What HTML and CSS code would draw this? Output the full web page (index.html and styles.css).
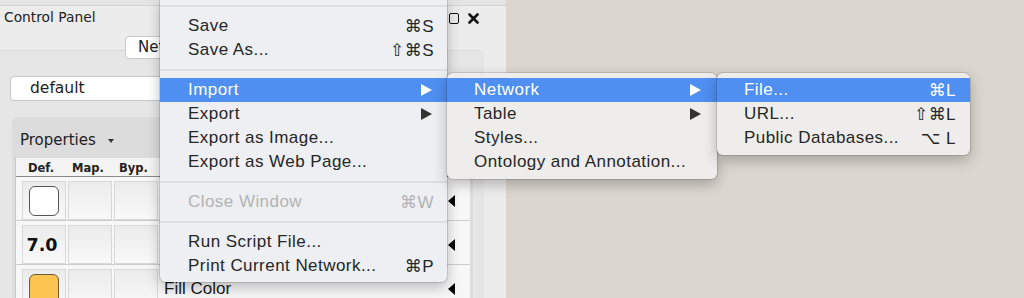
FILE: index.html
```html
<!DOCTYPE html>
<html lang="en">
<head>
<meta charset="UTF-8">
<title>Control Panel - File menu</title>
<link rel="stylesheet" href="styles.css">
</head>
<body>
<div class="desktop">
<div class="control-panel">
<div class="panel-top"></div>
<div class="title-row">
<span class="title">Control Panel</span>
<span class="win-icons">
<span class="win-float"></span>
<svg class="win-close" width="11" height="11" viewBox="0 0 11 11"><path d="M1.5 1.5 L9.5 9.5 M9.5 1.5 L1.5 9.5" stroke="#111" stroke-width="2.6" stroke-linecap="round"/></svg>
</span>
</div>
<div class="tabs">
<span class="tab">Network</span>
</div>
<div class="tab-body">
<div class="style-select">default</div>
<div class="props">
<div class="props-head">Properties <span class="caret"></span></div>
<div class="props-table">
<div class="thead">
<span class="th-def">Def.</span>
<span class="th-map">Map.</span>
<span>Byp.</span>
</div>
<div class="row">
<div class="cell"><span class="swatch"></span></div>
<div class="cell"></div>
<div class="cell"></div>
<span class="label"></span>
<span class="row-arrow"></span>
</div>
<div class="row">
<div class="cell"><span class="num">7.0</span></div>
<div class="cell"></div>
<div class="cell"></div>
<span class="label"></span>
<span class="row-arrow"></span>
</div>
<div class="row">
<div class="cell"><span class="swatch orange"></span></div>
<div class="cell"></div>
<div class="cell"></div>
<span class="label">Fill Color</span>
<span class="row-arrow"></span>
</div>
</div>
</div>
</div>
</div>
<div class="canvas"></div>

<div class="menu menu-main">
<div class="sep"></div>
<div class="item"><span>Save</span><span class="key">⌘S</span></div>
<div class="item"><span>Save As...</span><span class="key">⇧⌘S</span></div>
<div class="sep"></div>
<div class="item active"><span>Import</span><svg class="sub" width="11" height="12" viewBox="0 0 11 12"><polygon points="0,0 11,6 0,12"/></svg></div>
<div class="item"><span>Export</span><svg class="sub" width="11" height="12" viewBox="0 0 11 12"><polygon points="0,0 11,6 0,12"/></svg></div>
<div class="item"><span>Export as Image...</span></div>
<div class="item"><span>Export as Web Page...</span></div>
<div class="sep"></div>
<div class="item disabled"><span>Close Window</span><span class="key">⌘W</span></div>
<div class="sep"></div>
<div class="item"><span>Run Script File...</span></div>
<div class="item"><span>Print Current Network...</span><span class="key">⌘P</span></div>
</div>

<div class="menu menu-sub menu-import">
<div class="item active"><span>Network</span><svg class="sub" width="11" height="12" viewBox="0 0 11 12"><polygon points="0,0 11,6 0,12"/></svg></div>
<div class="item"><span>Table</span><svg class="sub" width="11" height="12" viewBox="0 0 11 12"><polygon points="0,0 11,6 0,12"/></svg></div>
<div class="item"><span>Styles...</span></div>
<div class="item"><span>Ontology and Annotation...</span></div>
</div>

<div class="menu menu-sub menu-network">
<div class="item active"><span>File...</span><span class="key">⌘L</span></div>
<div class="item"><span>URL...</span><span class="key">⇧⌘L</span></div>
<div class="item"><span>Public Databases...</span><span class="key">⌥ L</span></div>
</div>
</div>
</body>
</html>
```
FILE: styles.css
```css
body {
margin: 0;
font-family: "DejaVu Sans", sans-serif;
background: #dbd6cf;
overflow: hidden;
}
.desktop {
position: relative;
display: flex;
height: 298px;
overflow: hidden;
}
.control-panel {
width: 506px;
flex-shrink: 0;
background: #ececec;
display: flex;
flex-direction: column;
color: #222;
}
.control-panel > * {
flex-shrink: 0;
}
.panel-top {
height: 5px;
background: #e4e4e4;
border-bottom: 1px solid #d3d3d3;
}
.title-row {
height: 22px;
display: flex;
align-items: center;
padding-left: 4px;
font-size: 13.8px;
}
.title-row .title {
flex: 1;
}
.win-icons {
display: flex;
align-items: center;
gap: 9px;
margin-right: 27px;
margin-top: 2px;
}
.win-float {
width: 10px;
height: 11px;
box-sizing: border-box;
border: 1.5px solid #111;
border-radius: 2px;
}
.tabs {
display: flex;
padding-left: 125px;
margin-top: 8px;
position: relative;
z-index: 1;
}
.tab {
height: 23px;
box-sizing: border-box;
padding: 0 12px;
background: #fff;
border: 1px solid #c9c9c9;
border-radius: 4px;
font-size: 15px;
line-height: 21px;
}
.tab-body {
margin-top: -9px;
width: 484px;
height: 260px;
box-sizing: border-box;
background: #e6e6e6;
border-top: 1px solid #dadada;
border-top-right-radius: 6px;
padding: 25px 0 0 10px;
}
.style-select {
width: 462px;
height: 25px;
box-sizing: border-box;
background: #fff;
border: 1px solid #c8c8c8;
border-radius: 4px;
padding-left: 19px;
font-size: 15.5px;
line-height: 23px;
}
.props {
margin: 16px 0 0 2px;
width: 461px;
height: 200px;
background: #dcdcdc;
border-radius: 6px 6px 0 0;
}
.props-head {
height: 41px;
box-sizing: border-box;
display: flex;
align-items: center;
padding: 5px 0 0 8px;
font-size: 15px;
}
.caret {
margin-left: 12px;
margin-top: 1px;
border-left: 3px solid transparent;
border-right: 3px solid transparent;
border-top: 4px solid #333;
}
.props-table {
margin-left: 3px;
width: 454px;
height: 160px;
background: #f7f7f7;
border-left: 1px solid #c5c5c5;
}
.thead {
height: 19px;
box-sizing: border-box;
display: flex;
align-items: center;
padding: 2px 0 0 12px;
background: #f4f4f4;
border-bottom: 1px solid #8a8a8a;
font-size: 11.5px;
font-weight: bold;
}
.th-def {
width: 44px;
}
.th-map {
width: 47px;
}
.row {
display: flex;
height: 44px;
box-sizing: border-box;
padding: 4px 15px 0 6px;
gap: 2px;
border-bottom: 1px solid #cdcdcd;
}
.cell {
width: 44px;
height: 39px;
box-sizing: border-box;
border: 1px solid #d8d8d8;
background: linear-gradient(#ebebeb, #f9f9f9);
display: flex;
align-items: center;
justify-content: center;
}
.swatch {
width: 30px;
height: 30px;
box-sizing: border-box;
border: 1px solid #555;
border-radius: 6px;
background: #fff;
}
.swatch.orange {
background: #fbc34f;
border-color: #6d5a36;
}
.num {
font-size: 17.5px;
font-weight: bold;
color: #111;
margin-right: 4px;
}
.label {
flex: 1;
align-self: center;
margin-left: 4px;
font-family: "Liberation Sans", sans-serif;
font-size: 17px;
color: #1a1a1a;
}
.row-arrow {
align-self: center;
border-top: 6px solid transparent;
border-bottom: 6px solid transparent;
border-right: 7px solid #000;
}
.canvas {
flex: 1;
background: #dbd6cf;
}
.menu {
position: absolute;
z-index: 10;
background: #edeff2;
box-shadow: 0 5px 14px rgba(0, 0, 0, 0.26), 0 0 0 1px rgba(0, 0, 0, 0.12);
font-family: "Liberation Sans", "DejaVu Sans", sans-serif;
font-size: 17px;
letter-spacing: 0.45px;
color: #262626;
}
.menu-main {
left: 160px;
top: -2px;
width: 287px;
padding-bottom: 4px;
border-radius: 0 0 6px 6px;
}
.menu-sub {
top: 73px;
padding: 5px 0;
border-radius: 6px;
background: #eeedeb;
}
.menu-import {
left: 447px;
width: 270px;
}
.menu-network {
left: 717px;
width: 253px;
}
.item {
height: 24px;
display: flex;
align-items: center;
justify-content: space-between;
padding: 0 13px 0 28px;
}
.menu-sub .item {
padding: 0 14px 0 27px;
}
.item .sub {
fill: #333;
margin-right: 2px;
}
.item.active {
background: #4f8ff1;
color: #fff;
}
.item.active .sub {
fill: #fff;
}
.item.disabled {
color: #b3b3b3;
}
.sep {
height: 2px;
margin: 7px 0;
background: #dcdee1;
}
```
